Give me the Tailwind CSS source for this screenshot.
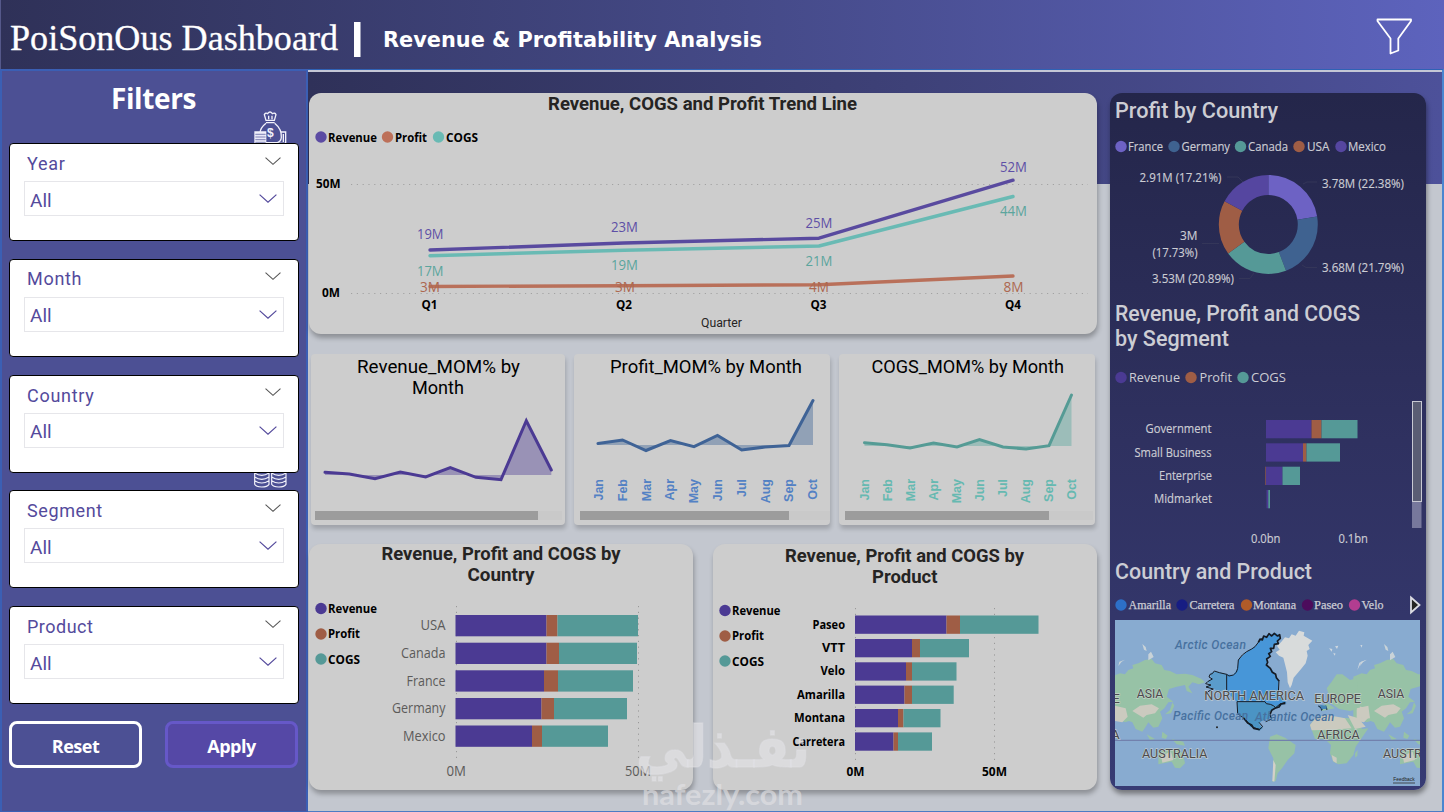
<!DOCTYPE html>
<html lang="en">
<head>
    <meta charset="UTF-8">
    <meta name="viewport" content="width=device-width, initial-scale=1.0">
    <title>PoiSonOus Dashboard</title>
    <script src="https://cdn.jsdelivr.net/npm/@tailwindcss/browser@4"></script>
    <style>
        svg text { white-space: pre; }
        .seg { font-family: 'Open Sans', 'Noto Sans', sans-serif; }
        .din { font-family: Roboto, sans-serif; }
    </style>
</head>
<body class="relative flex h-[812px] w-[1444px] flex-col overflow-hidden bg-[#c3c7cf]">

    <!-- Shared icons -->
    <svg class="hidden">
        <symbol id="chevron" viewBox="0 0 18 9"><path d="M.6 .6 L9 8.2 L17.4 .6" fill="none" stroke="currentColor" stroke-width="1.2"/></symbol>
    </svg>

    <!-- Header -->
    <header class="flex h-[69px] shrink-0 items-center border-l border-[#55588a] bg-linear-to-r from-[#2f3158] via-[#444986] to-[#5d63bd] text-white">
        <svg class="h-[69px] w-[1443px]" viewBox="1 0 1443 69" fill="#fff">
            <text x="10" y="50" font-size="36" textLength="328" lengthAdjust="spacingAndGlyphs" font-family="Liberation Serif, serif" stroke="#fff" stroke-width=".3">PoiSonOus Dashboard</text>
            <rect x="354" y="22" width="6.500" height="35"/>
            <text x="383" y="47" font-size="22" font-weight="700" textLength="379" lengthAdjust="spacingAndGlyphs" font-family="DejaVu Sans, sans-serif">Revenue &amp; Profitability Analysis</text>
            <path d="M1377.5 19.5 H1411 V21 L1398.3 38.5 V50.5 L1390.5 53.5 V38.5 L1377.5 21 Z" fill="none" stroke="#fff" stroke-width="1.8" stroke-linejoin="round"/>
        </svg>
    </header>

    <div class="flex min-h-0 flex-1">

        <!-- Filter pane -->
        <aside class="relative w-[308px] shrink-0 border-2 border-b border-[#3b5fb4] bg-[#4c5094] pl-[7px]">
            <h2 class="h-[72px] pt-[7px] pr-[8px] text-center font-['Open_Sans'] text-[28px] leading-[40px] font-bold tracking-[-0.4px] text-white">Filters</h2>

            <!-- money bag and coins, partly tucked behind the slicers -->
            <svg class="absolute top-[39px] left-[251px] h-[36px] w-[36px]" viewBox="759 330 108 108" fill="none" stroke="#f2f2fb" stroke-width="4">
                <path d="M798 361 L793 344 Q797 337 803 341 Q810 331 817 341 Q825 337 828 344 L823 361 Z M798 368 H824 M806 347 V358 M816 347 V358"/>
                <path d="M798 370 Q780 384 780 400 M824 370 Q846 388 844 412 Q843 424 832 428 H797"/>
                <path d="M765 396 H797 V432 H765 Z" fill="#e8e8f8"/>
                <path d="M766 403 H797 M766 411 H797 M766 419 H797 M766 427 H797" stroke="#4c5094" stroke-width="2"/>
                <path d="M843 396 H857 V430 H833 M850 402 V426" />
                <text x="801" y="412" font-size="36" font-weight="700" fill="#f2f2fb" stroke="none" font-family="Liberation Sans, sans-serif">$</text>
            </svg>
            <svg class="absolute top-[397px] left-[251px] h-[20px] w-[36px]" viewBox="759 23 108 60" fill="none" stroke="#f2f2fb" stroke-width="3.5">
                <path d="M764 30 V72 Q768 80 785 80 Q802 80 807 72 V30 M764 38 Q785 52 807 38 M764 50 Q785 64 807 50 M764 61 Q785 75 807 61"/>
                <path d="M815 30 V72 Q819 80 836 80 Q853 80 858 72 V30 M815 38 Q836 52 858 38 M815 50 Q836 64 858 50 M815 61 Q836 75 858 61"/>
            </svg>

            <div class="relative flex w-[290px] flex-col gap-[17.75px] text-[#544a9c]">
                <section class="h-[98px] rounded-[4px] border border-black bg-white px-[14px] font-[Roboto]">
                    <div class="flex h-[37px] items-center justify-between pr-[3px] pl-[3px] text-[18px] tracking-[0.7px]">
                        <span class="pt-[1px]">Year</span>
                        <svg class="mb-[4px] h-[8px] w-[16px] text-[#555]"><use href="#chevron"/></svg>
                    </div>
                    <div class="flex h-[35px] items-center justify-between border border-[#e6e6ea] pr-[6px] pl-[5px] text-[19px]">
                        <span class="pt-[5px]">All</span>
                        <svg class="h-[9px] w-[18px]"><use href="#chevron"/></svg>
                    </div>
                </section>
                <section class="h-[98px] rounded-[4px] border border-black bg-white px-[14px] font-[Roboto]">
                    <div class="flex h-[37px] items-center justify-between pr-[3px] pl-[3px] text-[18px] tracking-[0.7px]">
                        <span class="pt-[1px]">Month</span>
                        <svg class="mb-[4px] h-[8px] w-[16px] text-[#555]"><use href="#chevron"/></svg>
                    </div>
                    <div class="flex h-[35px] items-center justify-between border border-[#e6e6ea] pr-[6px] pl-[5px] text-[19px]">
                        <span class="pt-[4px]">All</span>
                        <svg class="h-[9px] w-[18px]"><use href="#chevron"/></svg>
                    </div>
                </section>
                <section class="h-[98px] rounded-[4px] border border-black bg-white px-[14px] font-[Roboto]">
                    <div class="flex h-[37px] items-center justify-between pr-[3px] pl-[3px] text-[18px] tracking-[0.7px]">
                        <span class="pt-[2px]">Country</span>
                        <svg class="mb-[4px] h-[8px] w-[16px] text-[#555]"><use href="#chevron"/></svg>
                    </div>
                    <div class="flex h-[35px] items-center justify-between border border-[#e6e6ea] pr-[6px] pl-[5px] text-[19px]">
                        <span class="pt-[5px]">All</span>
                        <svg class="h-[9px] w-[18px]"><use href="#chevron"/></svg>
                    </div>
                </section>
                <section class="h-[98px] rounded-[4px] border border-black bg-white px-[14px] font-[Roboto]">
                    <div class="flex h-[37px] items-center justify-between pr-[3px] pl-[3px] text-[18px] tracking-[0.6px]">
                        <span class="pt-[1px]">Segment</span>
                        <svg class="mb-[4px] h-[8px] w-[16px] text-[#555]"><use href="#chevron"/></svg>
                    </div>
                    <div class="flex h-[35px] items-center justify-between border border-[#e6e6ea] pr-[6px] pl-[5px] text-[19px]">
                        <span class="pt-[4px]">All</span>
                        <svg class="h-[9px] w-[18px]"><use href="#chevron"/></svg>
                    </div>
                </section>
                <section class="h-[98px] rounded-[4px] border border-black bg-white px-[14px] font-[Roboto]">
                    <div class="flex h-[37px] items-center justify-between pr-[3px] pl-[3px] text-[18px] tracking-[0.5px]">
                        <span class="pt-[1px]">Product</span>
                        <svg class="mb-[4px] h-[8px] w-[16px] text-[#555]"><use href="#chevron"/></svg>
                    </div>
                    <div class="flex h-[35px] items-center justify-between border border-[#e6e6ea] pr-[6px] pl-[5px] text-[19px]">
                        <span class="pt-[5px]">All</span>
                        <svg class="h-[9px] w-[18px]"><use href="#chevron"/></svg>
                    </div>
                </section>
            </div>

            <div class="mt-[17px] flex gap-[23px] font-['Open_Sans'] text-[18px] font-bold tracking-[-0.5px] text-white">
                <button class="h-[47px] w-[133px] rounded-[8px] border-3 border-white pt-[3px]">Reset</button>
                <button class="h-[47px] w-[133px] rounded-[8px] border-3 border-[#6658c8] bg-[#5548a6] pt-[3px]">Apply</button>
            </div>
        </aside>

        <!-- Report canvas -->
        <main class="relative flex-1 border-t border-r-2 border-b border-t-[#2f62b5] border-r-[#4a86d0] border-b-[#4c7cc4] bg-[#c3c7cf]">
            <div class="h-[114px] border-t-2 border-[#c4c7d6] bg-linear-to-r from-[#2f3159] via-[#3d4076] to-[#4d519a]"></div>

            <div class="-mt-[91px] flex gap-[13px] pl-[1px]">
                <div class="flex w-[788px] flex-col">

                    <!-- Trend line -->
                    <section class="h-[241px] rounded-[12px] bg-[#cdcdcd] shadow-[1px_4px_5px_rgba(0,0,0,0.28)]">
                        <svg class="seg block h-[241px] w-[788px]" viewBox="309 93 788 241" font-size="14.5">
                            <text x="548" y="110" font-size="19" font-weight="700" textLength="309" lengthAdjust="spacingAndGlyphs" class="din" fill="#252423">Revenue, COGS and Profit Trend Line</text>
                            <g font-size="12.5" font-weight="700">
                                <circle cx="321" cy="137" r="5.7" fill="#5c4ba3"/><text x="328" y="142" textLength="49" lengthAdjust="spacingAndGlyphs">Revenue</text>
                                <circle cx="387.5" cy="137" r="5.7" fill="#bd7059"/><text x="395" y="142" textLength="32" lengthAdjust="spacingAndGlyphs">Profit</text>
                                <circle cx="438.5" cy="137" r="5.7" fill="#69bab4"/><text x="446" y="142" textLength="32" lengthAdjust="spacingAndGlyphs">COGS</text>
                                <text x="316" y="188" textLength="24.5" lengthAdjust="spacingAndGlyphs">50M</text>
                                <text x="322" y="297" textLength="18" lengthAdjust="spacingAndGlyphs">0M</text>
                                <text x="421.5" y="309" textLength="16" lengthAdjust="spacingAndGlyphs">Q1</text>
                                <text x="616" y="309" textLength="16" lengthAdjust="spacingAndGlyphs">Q2</text>
                                <text x="810.5" y="309" textLength="16" lengthAdjust="spacingAndGlyphs">Q3</text>
                                <text x="1005" y="309" textLength="16" lengthAdjust="spacingAndGlyphs">Q4</text>
                            </g>
                            <path d="M351 184.5 H1088 M351 293.5 H1088" stroke="#a2a2a2" stroke-width="1" stroke-dasharray="1.2 4.6"/>
                            <g fill="none" stroke-width="3.4" stroke-linecap="round" stroke-linejoin="round">
                                <path d="M430 286.5 L624 285.7 L819 284.7 L1013 276" stroke="#b9705a"/>
                                <path d="M430 255.7 L624 250.2 L819 246 L1013 196.5" stroke="#69bab4"/>
                                <path d="M430 250 L624 243 L819 238.2 L1013 180.2" stroke="#594a9f"/>
                            </g>
                            <g fill="#5d4fa6">
                                <text x="417" y="239" textLength="26.5" lengthAdjust="spacingAndGlyphs">19M</text>
                                <text x="611" y="232" textLength="27" lengthAdjust="spacingAndGlyphs">23M</text>
                                <text x="805.5" y="228" textLength="27" lengthAdjust="spacingAndGlyphs">25M</text>
                                <text x="1000" y="172" textLength="27" lengthAdjust="spacingAndGlyphs">52M</text>
                            </g>
                            <g fill="#5ba59d">
                                <text x="417" y="276" textLength="26.5" lengthAdjust="spacingAndGlyphs">17M</text>
                                <text x="611" y="270" textLength="27" lengthAdjust="spacingAndGlyphs">19M</text>
                                <text x="805.5" y="266" textLength="27" lengthAdjust="spacingAndGlyphs">21M</text>
                                <text x="1000" y="216" textLength="27" lengthAdjust="spacingAndGlyphs">44M</text>
                            </g>
                            <g fill="#ac6850">
                                <text x="420" y="292" textLength="20" lengthAdjust="spacingAndGlyphs">3M</text>
                                <text x="615" y="292" textLength="20" lengthAdjust="spacingAndGlyphs">3M</text>
                                <text x="809" y="292" textLength="20" lengthAdjust="spacingAndGlyphs">4M</text>
                                <text x="1003.5" y="292" textLength="20" lengthAdjust="spacingAndGlyphs">8M</text>
                            </g>
                            <text x="701" y="327" font-size="12" class="din" fill="#252423" textLength="41" lengthAdjust="spacingAndGlyphs">Quarter</text>
                        </svg>
                    </section>

                    <!-- Month over month -->
                    <div class="mt-[20px] flex gap-[9px] pl-[2px]">
                        <section class="h-[171px] w-[254px] rounded-[4px] bg-[#cdcdcd] shadow-[1px_4px_4px_rgba(0,0,0,0.18)]">
                            <svg class="din block h-[171px] w-[254px]" viewBox="311 354 254 171">
                                <text x="357" y="373" font-size="18.5" textLength="163" lengthAdjust="spacingAndGlyphs">Revenue_MOM% by</text>
                                <text x="412" y="394" font-size="18.5" textLength="52" lengthAdjust="spacingAndGlyphs">Month</text>
                                <path d="M325 475 V472.3 L349.3 474 L375 478.7 L400.3 472 L425.7 477 L450.3 467.7 L476 477.3 L501 479.7 L526.3 420.7 L551.3 470 V475 Z" fill="#4b3a93" fill-opacity=".4"/>
                                <path d="M325 472.3 L349.3 474 L375 478.7 L400.3 472 L425.7 477 L450.3 467.7 L476 477.3 L501 479.7 L526.3 420.7 L551.3 470" fill="none" stroke="#4b3a93" stroke-width="3" stroke-linecap="round"/>
                                <rect x="315" y="511" width="247" height="9" fill="#c9c9c9"/><rect x="315" y="511" width="223" height="9" fill="#9c9c9c"/>
                            </svg>
                        </section>
                        <section class="h-[171px] w-[256px] rounded-[4px] bg-[#cdcdcd] shadow-[1px_4px_4px_rgba(0,0,0,0.18)]">
                            <svg class="din block h-[171px] w-[256px]" viewBox="574 354 256 171">
                                <text x="610" y="373" font-size="18.5" textLength="192" lengthAdjust="spacingAndGlyphs">Profit_MOM% by Month</text>
                                <path d="M598 445 V443.5 L622.5 440 L646 450.5 L670.5 440.5 L694 446.7 L717.5 435.5 L741.7 450 L765 447 L789 445.5 L813 400.5 V445 Z" fill="#3f6396" fill-opacity=".42"/>
                                <path d="M598 443.5 L622.5 440 L646 450.5 L670.5 440.5 L694 446.7 L717.5 435.5 L741.7 450 L765 447 L789 445.5 L813 400.5" fill="none" stroke="#3f6396" stroke-width="3" stroke-linecap="round"/>
                                <g font-family="Liberation Sans, sans-serif" font-size="12.5" font-weight="700" fill="#5381c4" text-anchor="end">
                                    <text transform="translate(603 479) rotate(-90)">Jan</text>
                                    <text transform="translate(627 479) rotate(-90)">Feb</text>
                                    <text transform="translate(651 479) rotate(-90)">Mar</text>
                                    <text transform="translate(674 479) rotate(-90)">Apr</text>
                                    <text transform="translate(698 479) rotate(-90)">May</text>
                                    <text transform="translate(722 479) rotate(-90)">Jun</text>
                                    <text transform="translate(746 479) rotate(-90)">Jul</text>
                                    <text transform="translate(770 479) rotate(-90)">Aug</text>
                                    <text transform="translate(793 479) rotate(-90)">Sep</text>
                                    <text transform="translate(817 479) rotate(-90)">Oct</text>
                                </g>
                                <rect x="580" y="511" width="250" height="9" fill="#c9c9c9"/><rect x="580" y="511" width="209" height="9" fill="#9c9c9c"/>
                            </svg>
                        </section>
                        <section class="h-[171px] w-[256px] rounded-[4px] bg-[#cdcdcd] shadow-[1px_4px_4px_rgba(0,0,0,0.18)]">
                            <svg class="din block h-[171px] w-[256px]" viewBox="839 354 256 171">
                                <text x="871.5" y="373" font-size="18.5" textLength="192.5" lengthAdjust="spacingAndGlyphs">COGS_MOM% by Month</text>
                                <path d="M864.5 446 V442.7 L887 444.7 L910 448 L933.5 443 L957 447 L979.5 439.5 L1003 447 L1026 449 L1049 445.7 L1071.5 395 V446 Z" fill="#57a79d" fill-opacity=".42"/>
                                <path d="M864.5 442.7 L887 444.7 L910 448 L933.5 443 L957 447 L979.5 439.5 L1003 447 L1026 449 L1049 445.7 L1071.5 395" fill="none" stroke="#559b95" stroke-width="3" stroke-linecap="round"/>
                                <g font-family="Liberation Sans, sans-serif" font-size="12.5" font-weight="700" fill="#66b9b1" text-anchor="end">
                                    <text transform="translate(869 479) rotate(-90)">Jan</text>
                                    <text transform="translate(892 479) rotate(-90)">Feb</text>
                                    <text transform="translate(915 479) rotate(-90)">Mar</text>
                                    <text transform="translate(938 479) rotate(-90)">Apr</text>
                                    <text transform="translate(961 479) rotate(-90)">May</text>
                                    <text transform="translate(984 479) rotate(-90)">Jun</text>
                                    <text transform="translate(1007 479) rotate(-90)">Jul</text>
                                    <text transform="translate(1030 479) rotate(-90)">Aug</text>
                                    <text transform="translate(1053 479) rotate(-90)">Sep</text>
                                    <text transform="translate(1076 479) rotate(-90)">Oct</text>
                                </g>
                                <rect x="845" y="511" width="248" height="9" fill="#c9c9c9"/><rect x="845" y="511" width="204" height="9" fill="#9c9c9c"/>
                            </svg>
                        </section>
                    </div>

                    <!-- Stacked bars -->
                    <div class="mt-[19px] flex gap-[20px]">
                        <section class="h-[246px] w-[384px] rounded-[12px] bg-[#cdcdcd] shadow-[1px_4px_5px_rgba(0,0,0,0.28)]">
                            <svg class="seg block h-[246px] w-[384px]" viewBox="309 544 384 246">
                                <g class="din" font-size="19" font-weight="700" fill="#252423">
                                    <text x="381.5" y="560" textLength="239" lengthAdjust="spacingAndGlyphs">Revenue, Profit and COGS by</text>
                                    <text x="467.5" y="581" textLength="67" lengthAdjust="spacingAndGlyphs">Country</text>
                                </g>
                                <g font-size="12.5" font-weight="700">
                                    <circle cx="321" cy="608.5" r="5.7" fill="#4b3a93"/><text x="328" y="613" textLength="49" lengthAdjust="spacingAndGlyphs">Revenue</text>
                                    <circle cx="321" cy="634" r="5.7" fill="#9f5d45"/><text x="328" y="638" textLength="32" lengthAdjust="spacingAndGlyphs">Profit</text>
                                    <circle cx="321" cy="659" r="5.7" fill="#559997"/><text x="328" y="664" textLength="32" lengthAdjust="spacingAndGlyphs">COGS</text>
                                </g>
                                <path d="M456.5 606 V758 M638.5 606 V758" stroke="#999" stroke-dasharray="1.2 4.6"/>
                                <g fill="#4b3a93">
                                    <rect x="455.5" y="615" width="91" height="21.3"/><rect x="455.5" y="642.7" width="91" height="21.3"/><rect x="455.5" y="670.3" width="88.5" height="21.3"/><rect x="455.5" y="698" width="86" height="21.3"/><rect x="455.5" y="725.5" width="76.5" height="21.3"/>
                                </g>
                                <g fill="#9f5d45">
                                    <rect x="546.5" y="615" width="11" height="21.3"/><rect x="546.5" y="642.7" width="12.5" height="21.3"/><rect x="544" y="670.3" width="14" height="21.3"/><rect x="541.5" y="698" width="12.5" height="21.3"/><rect x="532" y="725.5" width="10" height="21.3"/>
                                </g>
                                <g fill="#559997">
                                    <rect x="557.5" y="615" width="80.5" height="21.3"/><rect x="559" y="642.7" width="78" height="21.3"/><rect x="558" y="670.3" width="75" height="21.3"/><rect x="554" y="698" width="73" height="21.3"/><rect x="542" y="725.5" width="66" height="21.3"/>
                                </g>
                                <g font-size="14.5" fill="#5c5b5a">
                                    <text x="420.5" y="630" textLength="25" lengthAdjust="spacingAndGlyphs">USA</text>
                                    <text x="401" y="658" textLength="44.5" lengthAdjust="spacingAndGlyphs">Canada</text>
                                    <text x="406.5" y="686" textLength="39" lengthAdjust="spacingAndGlyphs">France</text>
                                    <text x="392" y="713" textLength="53.5" lengthAdjust="spacingAndGlyphs">Germany</text>
                                    <text x="403" y="741" textLength="42.5" lengthAdjust="spacingAndGlyphs">Mexico</text>
                                    <text x="446.5" y="776" textLength="19.5" lengthAdjust="spacingAndGlyphs">0M</text>
                                    <text x="625" y="776" textLength="26" lengthAdjust="spacingAndGlyphs">50M</text>
                                </g>
                            </svg>
                        </section>
                        <section class="h-[246px] w-[384px] rounded-[12px] bg-[#cdcdcd] shadow-[1px_4px_5px_rgba(0,0,0,0.28)]">
                            <svg class="seg block h-[246px] w-[384px]" viewBox="713 544 384 246">
                                <g class="din" font-size="19" font-weight="700" fill="#252423">
                                    <text x="785" y="562" textLength="239" lengthAdjust="spacingAndGlyphs">Revenue, Profit and COGS by</text>
                                    <text x="872" y="583" textLength="65.5" lengthAdjust="spacingAndGlyphs">Product</text>
                                </g>
                                <path d="M855.5 608 V762 M994.5 608 V762" stroke="#999" stroke-dasharray="1.2 4.6"/>
                                <g fill="#4b3a93">
                                    <rect x="855" y="615.5" width="91.5" height="18.3"/><rect x="855" y="639" width="57" height="18.3"/><rect x="855" y="662.3" width="51" height="18.3"/><rect x="855" y="685.6" width="49.5" height="18.3"/><rect x="855" y="709" width="43" height="18.3"/><rect x="855" y="732.4" width="38.5" height="18.3"/>
                                </g>
                                <g fill="#9f5d45">
                                    <rect x="946.5" y="615.5" width="13.5" height="18.3"/><rect x="912" y="639" width="8" height="18.3"/><rect x="906" y="662.3" width="6" height="18.3"/><rect x="904.5" y="685.6" width="7.5" height="18.3"/><rect x="898" y="709" width="5.5" height="18.3"/><rect x="893.5" y="732.4" width="4.5" height="18.3"/>
                                </g>
                                <g fill="#559997">
                                    <rect x="960" y="615.5" width="78.5" height="18.3"/><rect x="920" y="639" width="49" height="18.3"/><rect x="912" y="662.3" width="44.5" height="18.3"/><rect x="912" y="685.6" width="41.7" height="18.3"/><rect x="903.5" y="709" width="37" height="18.3"/><rect x="898" y="732.4" width="34" height="18.3"/>
                                </g>
                                <g font-size="12.5" font-weight="700">
                                    <circle cx="725" cy="610.5" r="5.7" fill="#4b3a93"/><text x="732" y="615" textLength="48.5" lengthAdjust="spacingAndGlyphs">Revenue</text>
                                    <circle cx="725" cy="636" r="5.7" fill="#9f5d45"/><text x="732" y="640" textLength="32" lengthAdjust="spacingAndGlyphs">Profit</text>
                                    <circle cx="725" cy="661" r="5.7" fill="#559997"/><text x="732" y="666" textLength="32" lengthAdjust="spacingAndGlyphs">COGS</text>
                                    <text x="812.5" y="629" textLength="32.5" lengthAdjust="spacingAndGlyphs">Paseo</text>
                                    <text x="822" y="652" textLength="23" lengthAdjust="spacingAndGlyphs">VTT</text>
                                    <text x="820.5" y="675" textLength="24.5" lengthAdjust="spacingAndGlyphs">Velo</text>
                                    <text x="797" y="699" textLength="48" lengthAdjust="spacingAndGlyphs">Amarilla</text>
                                    <text x="794" y="722" textLength="51" lengthAdjust="spacingAndGlyphs">Montana</text>
                                    <text x="792.5" y="746" textLength="52.5" lengthAdjust="spacingAndGlyphs">Carretera</text>
                                    <text x="846.5" y="776" textLength="18" lengthAdjust="spacingAndGlyphs">0M</text>
                                    <text x="982" y="776" textLength="25" lengthAdjust="spacingAndGlyphs">50M</text>
                                </g>
                            </svg>
                        </section>
                    </div>
                </div>

                <!-- Right panel -->
                <section class="h-[697px] w-[316px] rounded-[12px] bg-linear-to-b from-[#24264a] via-[#2f3160] to-[#373b74] shadow-[1px_4px_5px_rgba(0,0,0,0.4)]">
                    <svg class="seg block h-[697px] w-[316px]" viewBox="1110 93 316 697" fill="#cccdd4">
                        <g class="din" font-size="21.5" font-weight="500">
                            <text x="1115" y="118" textLength="163" lengthAdjust="spacingAndGlyphs">Profit by Country</text>
                            <text x="1115" y="321" textLength="245" lengthAdjust="spacingAndGlyphs">Revenue, Profit and COGS</text>
                            <text x="1115" y="346" textLength="114" lengthAdjust="spacingAndGlyphs">by Segment</text>
                            <text x="1115" y="579" textLength="197" lengthAdjust="spacingAndGlyphs">Country and Product</text>
                        </g>

                        <!-- donut -->
                        <g font-size="13" stroke="#cccdd4" stroke-width=".15">
                            <text x="1128" y="151" textLength="35" lengthAdjust="spacingAndGlyphs">France</text>
                            <text x="1181.5" y="151" textLength="48.5" lengthAdjust="spacingAndGlyphs">Germany</text>
                            <text x="1248" y="151" textLength="40" lengthAdjust="spacingAndGlyphs">Canada</text>
                            <text x="1307" y="151" textLength="22.5" lengthAdjust="spacingAndGlyphs">USA</text>
                            <text x="1348" y="151" textLength="38" lengthAdjust="spacingAndGlyphs">Mexico</text>
                            <text x="1139.5" y="182" textLength="82" lengthAdjust="spacingAndGlyphs">2.91M (17.21%)</text>
                            <text x="1322" y="188" textLength="82" lengthAdjust="spacingAndGlyphs">3.78M (22.38%)</text>
                            <text x="1180" y="240" textLength="17.5" lengthAdjust="spacingAndGlyphs">3M</text>
                            <text x="1152.5" y="257" textLength="45" lengthAdjust="spacingAndGlyphs">(17.73%)</text>
                            <text x="1152" y="283" textLength="82" lengthAdjust="spacingAndGlyphs">3.53M (20.89%)</text>
                            <text x="1322" y="272" textLength="82" lengthAdjust="spacingAndGlyphs">3.68M (21.79%)</text>
                        </g>
                        <circle cx="1121" cy="146.5" r="5.7" fill="#6d62c4"/><circle cx="1174" cy="146.5" r="5.7" fill="#3f6290"/><circle cx="1240.5" cy="146.5" r="5.7" fill="#559997"/><circle cx="1299" cy="146.5" r="5.7" fill="#9f5d45"/><circle cx="1341" cy="146.5" r="5.7" fill="#5546a0"/>
                        <path d="M1227 177 H1238 L1243 182 M1303 184 L1307 182 H1317 M1202 243.5 H1219 M1239 278.5 H1250 L1254 273 M1302 265 L1306 267.5 H1317" fill="none" stroke="#343659"/>
                        <g transform="rotate(-90 1268.3 224.5)" fill="none" stroke-width="20">
                            <circle cx="1268.3" cy="224.5" r="39.5" pathLength="100" stroke="#6d62c4" stroke-dasharray="22.38 77.62"/>
                            <circle cx="1268.3" cy="224.5" r="39.5" pathLength="100" stroke="#3f6290" stroke-dasharray="21.79 78.21" stroke-dashoffset="-22.38"/>
                            <circle cx="1268.3" cy="224.5" r="39.5" pathLength="100" stroke="#559997" stroke-dasharray="20.89 79.11" stroke-dashoffset="-44.17"/>
                            <circle cx="1268.3" cy="224.5" r="39.5" pathLength="100" stroke="#9f5d45" stroke-dasharray="17.73 82.27" stroke-dashoffset="-65.06"/>
                            <circle cx="1268.3" cy="224.5" r="39.5" pathLength="100" stroke="#5546a0" stroke-dasharray="17.21 82.79" stroke-dashoffset="-82.79"/>
                        </g>

                        <!-- segment bars -->
                        <g font-size="13.5">
                            <circle cx="1121" cy="377.5" r="5.7" fill="#4b3a93"/><text x="1129" y="382" textLength="51" lengthAdjust="spacingAndGlyphs">Revenue</text>
                            <circle cx="1191" cy="377.5" r="5.7" fill="#9f5d45"/><text x="1199.5" y="382" textLength="32.5" lengthAdjust="spacingAndGlyphs">Profit</text>
                            <circle cx="1243" cy="377.5" r="5.7" fill="#559997"/><text x="1251" y="382" textLength="35" lengthAdjust="spacingAndGlyphs">COGS</text>
                        </g>
                        <g font-size="12.5" stroke="#cccdd4" stroke-width=".15">
                            <text x="1145.5" y="433" textLength="66" lengthAdjust="spacingAndGlyphs">Government</text>
                            <text x="1134.5" y="457" textLength="77" lengthAdjust="spacingAndGlyphs">Small Business</text>
                            <text x="1159" y="480" textLength="53" lengthAdjust="spacingAndGlyphs">Enterprise</text>
                            <text x="1154" y="503" textLength="58" lengthAdjust="spacingAndGlyphs">Midmarket</text>
                            <text x="1251" y="543" textLength="29.5" lengthAdjust="spacingAndGlyphs">0.0bn</text>
                            <text x="1338.5" y="543" textLength="29.5" lengthAdjust="spacingAndGlyphs">0.1bn</text>
                        </g>
                        <g fill="#4b3a93"><rect x="1266" y="420" width="45.5" height="18.3"/><rect x="1266" y="443.3" width="37" height="18.3"/><rect x="1266" y="466.7" width="16.5" height="18.3"/><rect x="1266.5" y="490" width="2" height="18.3"/></g>
                        <g fill="#9f5d45"><rect x="1311.5" y="420" width="10" height="18.3"/><rect x="1303" y="443.3" width="3.5" height="18.3"/><rect x="1265" y="466.7" width="1" height="18.3" fill-opacity=".6"/></g>
                        <g fill="#559997"><rect x="1321.5" y="420" width="36" height="18.3"/><rect x="1306.5" y="443.3" width="33.5" height="18.3"/><rect x="1282.5" y="466.7" width="17.5" height="18.3"/><rect x="1268.3" y="490" width="1.7" height="18.3"/></g>
                        <rect x="1412" y="401" width="9.5" height="127" fill="#77789c"/>
                        <rect x="1412.5" y="401.5" width="9" height="100" fill="#5a5d74" stroke="#c8c9d3"/>

                        <!-- map legend -->
                        <g font-family="Liberation Serif, serif" font-size="12.5" stroke="#cccdd4" stroke-width=".25">
                            <text x="1128.5" y="609" textLength="42.5" lengthAdjust="spacingAndGlyphs">Amarilla</text>
                            <text x="1189.5" y="609" textLength="45" lengthAdjust="spacingAndGlyphs">Carretera</text>
                            <text x="1253" y="609" textLength="43" lengthAdjust="spacingAndGlyphs">Montana</text>
                            <text x="1314" y="609" textLength="29" lengthAdjust="spacingAndGlyphs">Paseo</text>
                            <text x="1361.5" y="609" textLength="22" lengthAdjust="spacingAndGlyphs">Velo</text>
                        </g>
                        <circle cx="1121" cy="605" r="5.7" fill="#2d70c8"/><circle cx="1182" cy="605" r="5.7" fill="#171d83"/><circle cx="1246.5" cy="605" r="5.7" fill="#b05b29"/><circle cx="1307.5" cy="605" r="5.7" fill="#4c0c5c"/><circle cx="1354.5" cy="605" r="5.7" fill="#b23d90"/>
                        <path d="M1411 597.5 L1419.5 605 L1411 612.5 Z" fill="#252423" stroke="#dcdce2" stroke-width="1.8"/>

                        <!-- map -->
                        <svg x="1115" y="620" width="305" height="166" viewBox="30 105 915 498" preserveAspectRatio="none">
                            <rect x="30" y="105" width="915" height="498" fill="#88abd0"/>
                            <g id="asia" fill="#97c2a6">
                                <path d="M20 275 L45 265 60 268 70 255 85 250 82 240 100 235 120 225 140 222 150 235 170 240 178 255 195 258 215 268 240 266 262 270 290 282 300 292 282 298 262 292 250 305 262 325 245 318 240 300 215 305 192 312 185 335 205 350 190 352 178 370 165 380 172 400 160 425 145 428 130 412 122 425 112 440 92 432 82 412 72 408 60 412 45 405 20 400 Z"/>
                                <path d="M30 362 L62 370 68 395 52 412 30 408 Z M82 378 L105 362 140 358 162 370 150 385 125 390 115 398 98 388 Z" fill="#cbcabf"/>
                                <path d="M130 208 L138 200 146 216 130 226 Z M112 177 L122 186 125 198 117 194 Z M60 224 L50 230 40 243 43 230 Z" fill="#c9d3d8"/>
                                <path d="M125 448 L150 462 135 465 Z M172 440 L188 452 182 462 170 458 Z M180 388 L195 375 202 352 208 362 198 385 Z M200 462 L235 470 240 482 215 478 Z"/>
                                <path d="M160 502 L185 490 210 495 222 488 235 512 240 535 225 550 210 548 200 530 175 535 160 538 Z"/>
                                <path d="M168 512 L198 500 205 525 172 533 Z" fill="#cbcabf"/>
                            </g>
                            <use href="#asia" x="725"/>
                            <path d="M680 290 L695 268 712 268 735 285 755 280 765 370 735 378 702 372 678 355 672 330 665 310 Z M690 370 L650 378 655 360 668 355 Z M632 345 L645 330 652 348 638 355 Z" fill="#97c2a6"/>
                            <path d="M615 420 L630 400 665 390 700 398 740 400 772 432 790 430 768 462 752 485 745 510 725 535 700 538 685 530 675 505 678 480 660 462 630 462 Z" fill="#97c2a6"/>
                            <path d="M615 420 L632 398 668 390 720 400 740 430 680 434 620 436 Z M728 390 L760 400 782 425 750 432 Z M755 370 L790 362 795 400 770 402 Z M680 510 L695 518 695 535 684 528 Z" fill="#cbcabf"/>
                            <path d="M750 505 L758 495 757 512 751 518 Z" fill="#97c2a6"/>
                            <path d="M495 455 L515 448 540 458 572 480 568 505 548 525 532 548 518 565 512 588 502 590 506 560 505 520 490 490 Z" fill="#97c2a6"/>
                            <path d="M505 525 L512 540 508 590 502 588 Z" fill="#d3d0c8"/>
                            <path d="M516 182 L528 172 540 157 552 160 560 148 572 152 582 137 598 142 596 152 622 167 610 180 614 192 605 198 608 212 602 235 590 250 580 262 566 278 560 300 555 310 548 292 546 262 540 238 535 218 522 212 512 202 524 194 Z" fill="#d8dbdb"/>
                            <path d="M672 190 L682 192 680 200 Z M690 184 L700 182 696 192 Z M685 203 L692 206 688 212 Z M766 180 L772 180 770 188 Z M786 224 L768 234 757 255 763 233 Z" fill="#ccd6df"/>
                            <!-- selected region -->
                            <path d="M365 268 L385 270 398 250 400 225 425 200 450 185 470 160 490 148 515 145 525 155 518 170 500 188 498 205 486 225 488 245 502 255 522 285 520 325 545 355 525 360 505 362 480 352 396 350 365 320 Z" fill="#4796d8"/>
                            <path d="M365 268 L340 260 320 262 315 270 322 282 308 290 318 300 305 305 325 310 340 320 365 312 Z" fill="#5a9ccb"/>
                            <path d="M396 352 L480 352 505 362 545 352 505 374 495 386 502 398 470 408 462 416 473 430 463 437 435 425 418 400 398 386 Z" fill="#4b94c4"/>
                            <g fill="none" stroke="#151b24" stroke-width="3" stroke-linejoin="round">
                                <path d="M300 328 L312 318 325 312 303 306 318 300 302 296 308 290 322 282 312 276 315 268 322 266 328 258 343 263 365 268 V315 M365 268 L372 273 385 270 394 262 398 250 400 225 412 210 425 200 440 192 450 185 460 172 470 160 M522 285 L520 325 M396 350 H480 L484 356 496 358 505 362 512 368 525 357 541 352 M396 350 L398 385 408 394 418 400 440 425 463 434 473 425 462 412 M495 390 L500 402 482 410"/>
                                <path d="M460 172 L465 162 472 165 476 153 485 157 492 146 500 153 508 145 517 153 524 149 526 160 517 168 520 176 508 178 506 190 496 190 500 200 491 206 496 214 485 222 488 232 484 240 496 250 502 262 512 268 514 278 522 288 M495 388 L500 376 510 370 522 366 528 357 541 355 M415 398 L428 414 440 420 446 430 464 434" stroke-width="5"/>
                            </g>
                            <path d="M640 362 L648 368 650 374 655 366 662 364 666 374" fill="none" stroke="#1f3850" stroke-width="4"/><path d="M645 360 L665 362 664 372 650 372 Z" fill="#4485b7"/><circle cx="336" cy="427" r="3" fill="#222"/>
                            <path d="M30 466 H945" stroke="#7281ad" stroke-width="4"/>
                            <g font-family="Roboto, sans-serif" font-style="italic" font-weight="500" font-size="36" fill="#47719f">
                                <text x="210" y="192" textLength="213">Arctic Ocean</text>
                                <text x="204" y="405" textLength="226">Pacific Ocean</text>
                                <text x="450" y="408" textLength="238">Atlantic Ocean</text>
                            </g>
                            <g font-family="Roboto, sans-serif" font-size="40" fill="#4b4a4c" stroke="#d1d5d2" stroke-width="4" paint-order="stroke" stroke-opacity=".75">
                                <text x="22" y="354">E</text>
                                <text x="18" y="461">A</text>
                                <text x="95" y="340" textLength="80" lengthAdjust="spacingAndGlyphs">ASIA</text>
                                <text x="298" y="345" textLength="299" lengthAdjust="spacingAndGlyphs">NORTH AMERICA</text>
                                <text x="628" y="353" textLength="140" lengthAdjust="spacingAndGlyphs">EUROPE</text>
                                <text x="818" y="340" textLength="80" lengthAdjust="spacingAndGlyphs">ASIA</text>
                                <text x="637" y="461" textLength="127" lengthAdjust="spacingAndGlyphs">AFRICA</text>
                                <text x="111" y="518" textLength="196" lengthAdjust="spacingAndGlyphs">AUSTRALIA</text>
                                <text x="834" y="518" textLength="196" lengthAdjust="spacingAndGlyphs">AUSTRALIA</text>
                            </g>
                            <text x="865" y="588" font-family="Liberation Sans, sans-serif" font-size="16" fill="#222" textLength="64" lengthAdjust="spacingAndGlyphs">Feedback</text>
                            <path d="M864 594 H930" stroke="#333" stroke-width="2.5"/>
                        </svg>
                    </svg>
                </section>
            </div>
        </main>
    </div>

    <!-- Watermark -->
    <svg class="pointer-events-none absolute top-[712px] left-[630px] h-[100px] w-[190px]" viewBox="630 712 190 100" fill="#e2e2e5" fill-opacity=".65" stroke="#e2e2e5" stroke-opacity=".4" font-weight="700">
        <text x="810" y="767" direction="rtl" font-size="58" stroke-width="1.5" textLength="174" lengthAdjust="spacingAndGlyphs" font-family="DejaVu Sans, sans-serif">نفـذلي</text>
        <text x="642" y="805" font-size="28" stroke-width="0" textLength="161" lengthAdjust="spacingAndGlyphs" font-family="Lato, sans-serif">nafezly.com</text>
    </svg>
</body>
</html>
